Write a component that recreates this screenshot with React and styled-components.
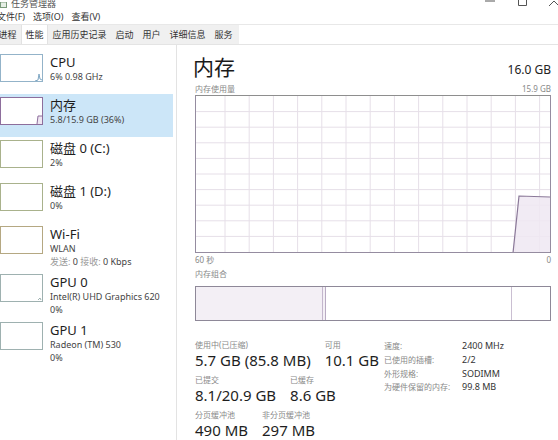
import React from 'react';
import styled, { createGlobalStyle } from 'styled-components';

const Global = createGlobalStyle`
  html, body { margin: 0; padding: 0; background: #fff; }
  body {
    font-family: "Noto Sans", "Noto Sans CJK SC", sans-serif;
    color: #222;
    overflow: hidden;
  }
  * { box-sizing: border-box; }
`;

const Window = styled.div`
  width: 558px;
  height: 440px;
  overflow: hidden;
  display: flex;
  flex-direction: column;
  background: #fff;
`;

const TitleBar = styled.div`
  height: 10px;
  display: flex;
  align-items: flex-end;
  justify-content: space-between;
  overflow: hidden;
`;

const TitleLeft = styled.div`
  display: flex;
  align-items: flex-end;
  gap: 4px;
  padding-bottom: 2px;
`;

const TitleText = styled.span`
  font-size: 9px;
  line-height: 9px;
  color: #555;
`;

const Controls = styled.div`
  display: flex;
  align-self: stretch;
  margin-right: -12px;
`;

const ControlBtn = styled.div`
  width: 32px;
  height: 10px;
  display: flex;
  justify-content: center;
  align-items: flex-start;
  svg { display: block; }
`;

const MenuBar = styled.div`
  height: 15px;
  display: flex;
  align-items: center;
  border-bottom: 1px solid #e8e8e8;
  margin-left: -7px;
`;

const MenuItem = styled.span`
  font-size: 9px;
  line-height: 14px;
  color: #333;
  padding: 0 4px;
`;

const TabStrip = styled.div`
  height: 20px;
  display: flex;
  border-bottom: 1px solid #e4e4e4;
`;

const Tabs = styled.div`
  display: flex;
  background: #f0f0f0;
  margin-left: -6px;
  padding-right: 2px;
`;

const Tab = styled.span`
  font-size: 9px;
  line-height: 19px;
  padding: 0 3.5px;
  color: #333;
  background: ${p => (p.$active ? '#fff' : 'transparent')};
  border-left: 1px solid ${p => (p.$active ? '#e2e2e2' : 'transparent')};
  border-right: 1px solid ${p => (p.$active ? '#e2e2e2' : 'transparent')};
`;

const Main = styled.div`
  flex: 1;
  display: flex;
  min-height: 0;
`;

const Sidebar = styled.div`
  width: 177px;
  flex: none;
  border-right: 1px solid #e3e3e3;
  padding-top: 6px;
  display: flex;
  flex-direction: column;
`;

const Item = styled.div`
  display: flex;
  align-items: flex-start;
  min-height: 43px;
  padding: 3px 0;
  margin-right: 3px;
  background: ${p => (p.$active ? '#cce6f8' : 'transparent')};
`;

const Thumb = styled.div`
  width: 43px;
  height: 28px;
  flex: none;
  border: 1px solid ${p => p.$color};
  background: #fff;
  margin-right: 7px;
  svg { display: block; }
`;

const ItemText = styled.div`
  display: flex;
  flex-direction: column;
`;

const ItemTitle = styled.span`
  font-size: 13px;
  line-height: 16px;
  color: #1e1e1e;
`;

const ItemSub = styled.span`
  font-size: 9px;
  line-height: 13px;
  color: #444;
  white-space: nowrap;
`;

const Dim = styled.span`
  color: #9a9a9a;
`;

const Panel = styled.div`
  flex: 1;
  padding: 9px 7px 0 18px;
  display: flex;
  flex-direction: column;
`;

const Header = styled.div`
  display: flex;
  justify-content: space-between;
  align-items: flex-end;
`;

const BigTitle = styled.span`
  font-size: 21px;
  line-height: 26px;
  margin-left: -2px;
  color: #1a1a1a;
`;

const Total = styled.span`
  font-size: 12px;
  line-height: 16px;
  margin-bottom: 2px;
  color: #222;
`;

const SmallRow = styled.div`
  display: flex;
  justify-content: space-between;
  margin-top: ${p => p.$mt || 0}px;
`;

const Small = styled.span`
  font-size: 8px;
  line-height: 11px;
  color: #888;
`;

const Graph = styled.div`
  margin-top: 1px;
  height: 158px;
  border: 1px solid #958ca0;
  border-top-color: #8e8e8e;
  svg { display: block; }
`;

const Composition = styled.div`
  margin-top: 7px;
  height: 36px;
  border: 1px solid #8e8898;
  display: flex;
`;

const Segment = styled.div`
  width: ${p => p.$w}px;
  flex: ${p => (p.$grow ? 1 : 'none')};
  background: ${p => p.$bg || '#fff'};
  border-right: ${p => (p.$line ? `1px solid ${p.$line}` : 'none')};
`;

const Stats = styled.div`
  margin-top: 18px;
  display: grid;
  grid-template-columns: 189px auto;
`;

const StatRows = styled.div`
  display: flex;
  flex-direction: column;
  gap: 4px;
`;

const StatRow = styled.div`
  display: flex;
  gap: 14px;
`;

const Stat = styled.div`
  display: flex;
  flex-direction: column;
`;

const StatLabel = styled.span`
  font-size: 8px;
  line-height: 12px;
  color: #888;
  white-space: nowrap;
`;

const StatValue = styled.span`
  font-size: 15px;
  line-height: 19px;
  color: #1e1e1e;
  white-space: nowrap;
`;

const Info = styled.div`
  display: grid;
  grid-template-columns: 78px auto;
  grid-auto-rows: 13.7px;
  align-items: center;
`;

const InfoLabel = styled.span`
  font-size: 8px;
  color: #888;
  white-space: nowrap;
`;

const InfoValue = styled.span`
  font-size: 9px;
  color: #333;
  white-space: nowrap;
`;

const items = [
  { title: 'CPU', subs: ['6% 0.98 GHz'], color: '#93b3c9', kind: 'cpu' },
  { title: '内存', subs: ['5.8/15.9 GB (36%)'], color: '#8d6e9c', kind: 'mem', active: true },
  { title: '磁盘 0 (C:)', subs: ['2%'], color: '#a9b28c' },
  { title: '磁盘 1 (D:)', subs: ['0%'], color: '#a9b28c' },
  { title: 'Wi-Fi', subs: ['WLAN', 'wifi'], color: '#b5a882' },
  { title: 'GPU 0', subs: ['Intel(R) UHD Graphics 620', '0%'], color: '#9eb1b0', kind: 'gpu' },
  { title: 'GPU 1', subs: ['Radeon (TM) 530', '0%'], color: '#9eb1b0' },
];

function ThumbGraph({ kind }) {
  if (kind === 'cpu') {
    return (
      <svg width="41" height="26">
        <polyline points="34,26 37,25 38,19 39,24 41,25" fill="none" stroke="#7fa7c4" strokeWidth="1" />
      </svg>
    );
  }
  if (kind === 'mem') {
    return (
      <svg width="41" height="26">
        <polygon points="36,26 37,18 41,18 41,26" fill="#efe7f2" />
        <polyline points="36,26 37,18 41,18" fill="none" stroke="#8d6e9c" strokeWidth="1" />
      </svg>
    );
  }
  if (kind === 'gpu') {
    return (
      <svg width="41" height="26">
        <polyline points="37,25 39,23 40,25" fill="none" stroke="#9eb1b0" strokeWidth="1" />
      </svg>
    );
  }
  return null;
}

function MemGraph() {
  const w = 354;
  const h = 156;
  const vLines = [];
  for (let x = 29; x < w; x += 24.2) vLines.push(x);
  const hLines = [];
  for (let k = 1; k < 10; k++) hLines.push(k * 15.6);
  return (
    <svg width={w} height={h}>
      {vLines.map(x => (
        <line key={`v${x}`} x1={x} y1="0" x2={x} y2={h} stroke="#e6dfe8" strokeWidth="1" />
      ))}
      {hLines.map(y => (
        <line key={`h${y}`} x1="0" y1={y} x2={w} y2={y} stroke="#e6dfe8" strokeWidth="1" />
      ))}
      <polygon points="317,156 323,100 354,101 354,156" fill="#efe7f2" fillOpacity="0.85" />
      <polyline points="317,157 323,100 354,101" fill="none" stroke="#8a7898" strokeWidth="1.2" />
    </svg>
  );
}

export default function App() {
  return (
    <Window>
      <Global />
      <TitleBar>
        <TitleLeft>
          <svg width="7" height="6">
            <rect x="0.5" y="0" width="6" height="5.5" fill="#e6efe6" stroke="#7a9a7a" strokeWidth="1" />
          </svg>
          <TitleText>任务管理器</TitleText>
        </TitleLeft>
        <Controls>
          <ControlBtn>
            <svg width="10" height="4"><line x1="0" y1="1" x2="10" y2="1" stroke="#555" strokeWidth="1" /></svg>
          </ControlBtn>
          <ControlBtn>
            <svg width="9" height="6"><polyline points="0.5,0 0.5,5.5 8.5,5.5 8.5,0" fill="none" stroke="#555" strokeWidth="1" /></svg>
          </ControlBtn>
          <ControlBtn>
            <svg width="10" height="6"><polyline points="0,6 5,1 10,6" fill="none" stroke="#555" strokeWidth="1" /></svg>
          </ControlBtn>
        </Controls>
      </TitleBar>
      <MenuBar>
        <MenuItem>文件(F)</MenuItem>
        <MenuItem>选项(O)</MenuItem>
        <MenuItem>查看(V)</MenuItem>
      </MenuBar>
      <TabStrip>
        <Tabs>
          <Tab>进程</Tab>
          <Tab $active>性能</Tab>
          <Tab>应用历史记录</Tab>
          <Tab>启动</Tab>
          <Tab>用户</Tab>
          <Tab>详细信息</Tab>
          <Tab>服务</Tab>
        </Tabs>
      </TabStrip>
      <Main>
        <Sidebar>
          {items.map(it => (
            <Item key={it.title} $active={it.active}>
              <Thumb $color={it.color}>
                <ThumbGraph kind={it.kind} />
              </Thumb>
              <ItemText>
                <ItemTitle>{it.title}</ItemTitle>
                {it.subs.map(s =>
                  s === 'wifi' ? (
                    <ItemSub key={s}>
                      <Dim>发送:</Dim> 0 <Dim>接收:</Dim> 0 Kbps
                    </ItemSub>
                  ) : (
                    <ItemSub key={s}>{s}</ItemSub>
                  )
                )}
              </ItemText>
            </Item>
          ))}
        </Sidebar>
        <Panel>
          <Header>
            <BigTitle>内存</BigTitle>
            <Total>16.0 GB</Total>
          </Header>
          <SmallRow $mt={3}>
            <Small>内存使用量</Small>
            <Small>15.9 GB</Small>
          </SmallRow>
          <Graph>
            <MemGraph />
          </Graph>
          <SmallRow $mt={1}>
            <Small>60 秒</Small>
            <Small>0</Small>
          </SmallRow>
          <SmallRow $mt={3}>
            <Small>内存组合</Small>
          </SmallRow>
          <Composition>
            <Segment $w={127} $bg="#f3eff5" $line="#c3b6cc" />
            <Segment $w={3} $bg="#f3eff5" $line="#b9abc3" />
            <Segment $w={186} $line="#cabfd2" />
            <Segment $grow />
          </Composition>
          <Stats>
            <StatRows>
              <StatRow>
                <Stat>
                  <StatLabel>使用中(已压缩)</StatLabel>
                  <StatValue>5.7 GB (85.8 MB)</StatValue>
                </Stat>
                <Stat>
                  <StatLabel>可用</StatLabel>
                  <StatValue>10.1 GB</StatValue>
                </Stat>
              </StatRow>
              <StatRow>
                <Stat>
                  <StatLabel>已提交</StatLabel>
                  <StatValue>8.1/20.9 GB</StatValue>
                </Stat>
                <Stat>
                  <StatLabel>已缓存</StatLabel>
                  <StatValue>8.6 GB</StatValue>
                </Stat>
              </StatRow>
              <StatRow>
                <Stat>
                  <StatLabel>分页缓冲池</StatLabel>
                  <StatValue>490 MB</StatValue>
                </Stat>
                <Stat>
                  <StatLabel>非分页缓冲池</StatLabel>
                  <StatValue>297 MB</StatValue>
                </Stat>
              </StatRow>
            </StatRows>
            <Info>
              <InfoLabel>速度:</InfoLabel>
              <InfoValue>2400 MHz</InfoValue>
              <InfoLabel>已使用的插槽:</InfoLabel>
              <InfoValue>2/2</InfoValue>
              <InfoLabel>外形规格:</InfoLabel>
              <InfoValue>SODIMM</InfoValue>
              <InfoLabel>为硬件保留的内存:</InfoLabel>
              <InfoValue>99.8 MB</InfoValue>
            </Info>
          </Stats>
        </Panel>
      </Main>
    </Window>
  );
}
